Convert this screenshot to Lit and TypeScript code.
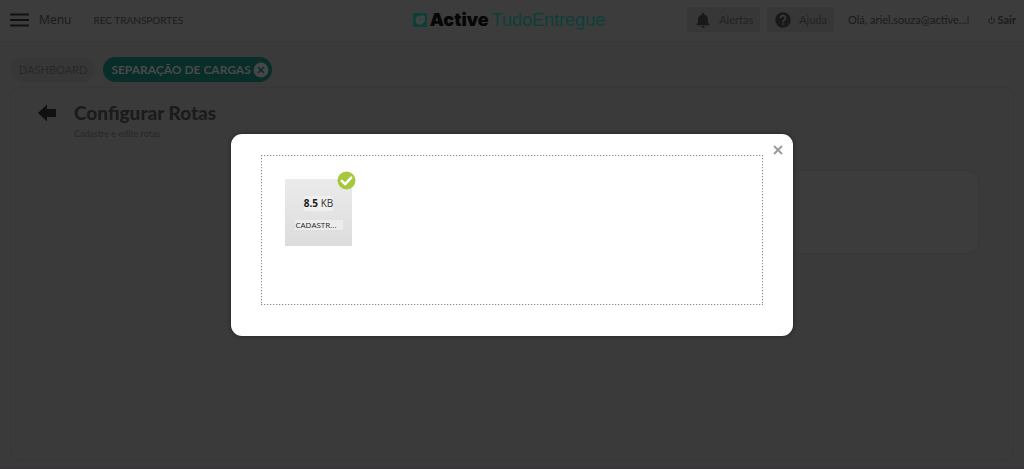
import { LitElement, html, css } from "lit";
import { customElement } from "lit/decorators.js";

@customElement("app-root")
export class AppRoot extends LitElement {
  static styles = css`
    :host {
      display: flex;
      flex-direction: column;
      min-height: 100vh;
      box-sizing: border-box;
      background: #3a3a3a;
      border-bottom: 2px solid #3a3538;
      font-family: Lato, "Open Sans", sans-serif;
      color: #1b1b1b;
    }
    * { box-sizing: border-box; }
    button, a {
      font: inherit;
      color: inherit;
      border: 0;
      padding: 0;
      background: none;
      text-decoration: none;
      display: flex;
      align-items: center;
    }
    svg { display: block; flex: none; }
    h1, p { margin: 0; }
    header {
      display: grid;
      grid-template-columns: 1fr auto 1fr;
      align-items: center;
      height: 42px;
      padding: 0 8px 2px 10px;
      background: #3c3c3c;
      border-bottom: 1px solid #383838;
      white-space: nowrap;
    }
    .left { display: flex; align-items: center; gap: 22px; }
    .menu { gap: 10px; font-size: 12px; font-family: "Noto Sans", sans-serif; }
    .company { font-size: 10px; color: #1b1b1b; }
    .brand { display: flex; align-items: center; gap: 3px; line-height: 20px; margin-right: 8px; }
    .brand-name {
      font: 900 18px/20px Inter, sans-serif;
      color: #060606;
    }
    .brand-product {
      font: 18px/20px "Liberation Sans", sans-serif;
      color: #0d3f39;
    }
    .right { display: flex; justify-content: flex-end; align-items: center; font-size: 11px; }
    .tool {
      height: 25px;
      border-radius: 3px;
      background: #373737;
      color: #222;
      padding: 0 7px 0 8px;
      gap: 8px;
      margin-right: 7px;
    }
    .user { margin: 0 18px 0 7px; }
    .exit { gap: 3px; font-size: 11px; font-weight: 700; }
    nav { display: flex; gap: 8px; padding: 15px 11px 5px; }
    .tab {
      height: 25px;
      border-radius: 13px;
      padding: 0 8px;
      background: #373737;
      color: #282828;
      font-size: 11px;
    }
    .tab.active {
      background: #092d29;
      color: #4a4a4a;
      font-size: 12px;
      font-weight: 700;
      gap: 2px;
      padding: 0 3px 0 8px;
    }
    main {
      flex: 1;
      margin: 0 10px 6px;
      padding: 12px 35px 0 27px;
      border: 1px solid #373737;
      border-radius: 10px;
      background: #3a3a3a;
    }
    .heading { display: flex; gap: 18px; align-items: flex-start; }
    .back { padding-top: 4px; }
    h1 { font-size: 19px; line-height: 26px; font-weight: 900; }
    .heading p { font-size: 9px; line-height: 16px; color: #272727; }
    .card {
      height: 82px;
      margin-top: 29px;
      margin-left: 50%;
      border-radius: 12px;
      background: #3c3c3c;
      box-shadow: 0 0 2px #353535;
    }
    .backdrop {
      position: fixed;
      inset: 0;
      display: flex;
      align-items: center;
      justify-content: center;
    }
    .dialog {
      position: relative;
      width: 562px;
      max-width: 90vw;
      padding: 21px 30px 31px;
      border-radius: 11px;
      background: #fff;
      box-shadow: 0 0 4px #222;
    }
    .close { position: absolute; top: 11px; right: 10px; }
    .drop {
      --dots: #8a8a8a 0 1px, #dedede 1px 2px, transparent 2px 3px;
      min-height: 150px;
      padding: 24px;
      background:
        repeating-linear-gradient(90deg, var(--dots)) top / 100% 1px no-repeat,
        repeating-linear-gradient(90deg, var(--dots)) bottom / 100% 1px no-repeat,
        repeating-linear-gradient(var(--dots)) left / 1px 100% no-repeat,
        repeating-linear-gradient(var(--dots)) right / 1px 100% no-repeat;
    }
    .file {
      position: relative;
      width: 67px;
      height: 67px;
      display: flex;
      flex-direction: column;
      align-items: center;
      padding-top: 17px;
      gap: 9px;
      background: linear-gradient(#ebebeb, #dcdcdc);
      font-family: "Open Sans", sans-serif;
      color: #333;
    }
    .size { font-size: 10px; line-height: 15px; background: #efefef; border-radius: 2px; }
    .size strong { color: #1a1a1a; }
    .name {
      width: 48px;
      font-size: 8px;
      line-height: 10px;
      background: #ececec;
      color: #222;
      white-space: nowrap;
      padding-left: 1px;
    }
    .check { position: absolute; top: -8px; right: -4px; }
  `;

  render() {
    return html`
      <header>
        <div class="left">
          <button class="menu">
            <svg width="19" height="14" viewBox="0 0 19 14" fill="none" stroke="#111" stroke-width="2">
              <path d="M0 1.5H19M0 7H19M0 12.5H19" />
            </svg>
            Menu
          </button>
          <span class="company">REC TRANSPORTES</span>
        </div>
        <div class="brand">
          <svg width="14" height="14" viewBox="0 0 14 14">
            <rect width="14" height="14" fill="#0d3f39" />
            <path d="M2.5 5 6 2.5 8 3.5 10 2 12 4 11.5 9 7.5 12 3 10Z" fill="#444" />
            <path d="M2.5 5 6.5 7 8 3.5M6.5 7V11.5M7 7 11.5 5.5M8.5 9 10.5 8" fill="none" stroke="#174640" stroke-width=".6" />
          </svg>
          <span class="brand-name">Active</span>
          <span class="brand-product">TudoEntregue</span>
        </div>
        <div class="right">
          <button class="tool">
            <svg width="16" height="16" viewBox="0 0 16 16" fill="#191919">
              <path d="M8 1c.8 0 1.3.5 1.3 1.2v.5C11.600 3.300 13 5.200 13 7.500v3.300l1.500 1.600v.8h-13v-.8L3 10.800V7.500c0-2.300 1.400-4.200 3.700-4.800v-.5C6.700 1.500 7.200 1 8 1ZM6.300 14h3.400c0 1-.8 1.700-1.700 1.700S6.300 15 6.300 14Z" />
            </svg>
            Alertas
          </button>
          <button class="tool">
            <svg width="16" height="16" viewBox="0 0 16 16">
              <circle cx="8" cy="8" r="7.700" fill="#191919" />
              <path d="M5.500 6.300C5.500 2.700 10.500 2.900 10.500 6 10.500 7.800 8 8 8 10" fill="none" stroke="#3b3b3b" stroke-width="1.600" />
              <path d="M7.200 11.200h1.600v1.600H7.200z" fill="#3b3b3b" />
            </svg>
            Ajuda
          </button>
          <span class="user">Olá, ariel.souza@active...!</span>
          <a class="exit" href="#">
            <svg width="7" height="8" viewBox="0 0 7 8" fill="none" stroke="#1b1b1b" stroke-width=".9">
              <path d="M2 2.200A2.800 2.800 0 1 0 5 2.200M3.500.5V4" />
            </svg>
            Sair
          </a>
        </div>
      </header>
      <nav>
        <a class="tab" href="#">DASHBOARD</a>
        <a class="tab active" href="#">
          SEPARAÇÃO DE CARGAS
          <svg width="16" height="16" viewBox="0 0 16 16">
            <circle cx="8" cy="8" r="7.500" fill="#464646" />
            <path d="m5 5 6 6m0-6-6 6" stroke="#092d29" stroke-width="1.500" />
          </svg>
        </a>
      </nav>
      <main>
        <div class="heading">
          <button class="back" aria-label="Voltar">
            <svg width="18" height="18" viewBox="0 0 18 18" fill="#111">
              <path d="M0 9 9 0.500V5h9v8H9v4.500Z" />
            </svg>
          </button>
          <div>
            <h1>Configurar Rotas</h1>
            <p>Cadastre e edite rotas</p>
          </div>
        </div>
        <section class="card"></section>
      </main>
      <div class="backdrop">
        <div class="dialog" role="dialog" aria-modal="true">
          <button class="close" aria-label="Fechar">
            <svg width="10" height="10" viewBox="0 0 10 10" stroke="#9c9c9c" stroke-width="2">
              <path d="m1 1 8 8m0-8-8 8" />
            </svg>
          </button>
          <div class="drop">
            <div class="file">
              <div class="size"><strong>8.5</strong> KB</div>
              <div class="name">CADASTR...</div>
              <svg class="check" width="19" height="19" viewBox="0 0 19 19">
                <circle cx="9.500" cy="9.500" r="9" fill="#a5c93b" />
                <path d="m4.800 9.800 3.300 3.300L14.200 6.700" fill="none" stroke="#fff" stroke-width="2.600" stroke-linecap="round" stroke-linejoin="round" />
              </svg>
            </div>
          </div>
        </div>
      </div>
    `;
  }
}
